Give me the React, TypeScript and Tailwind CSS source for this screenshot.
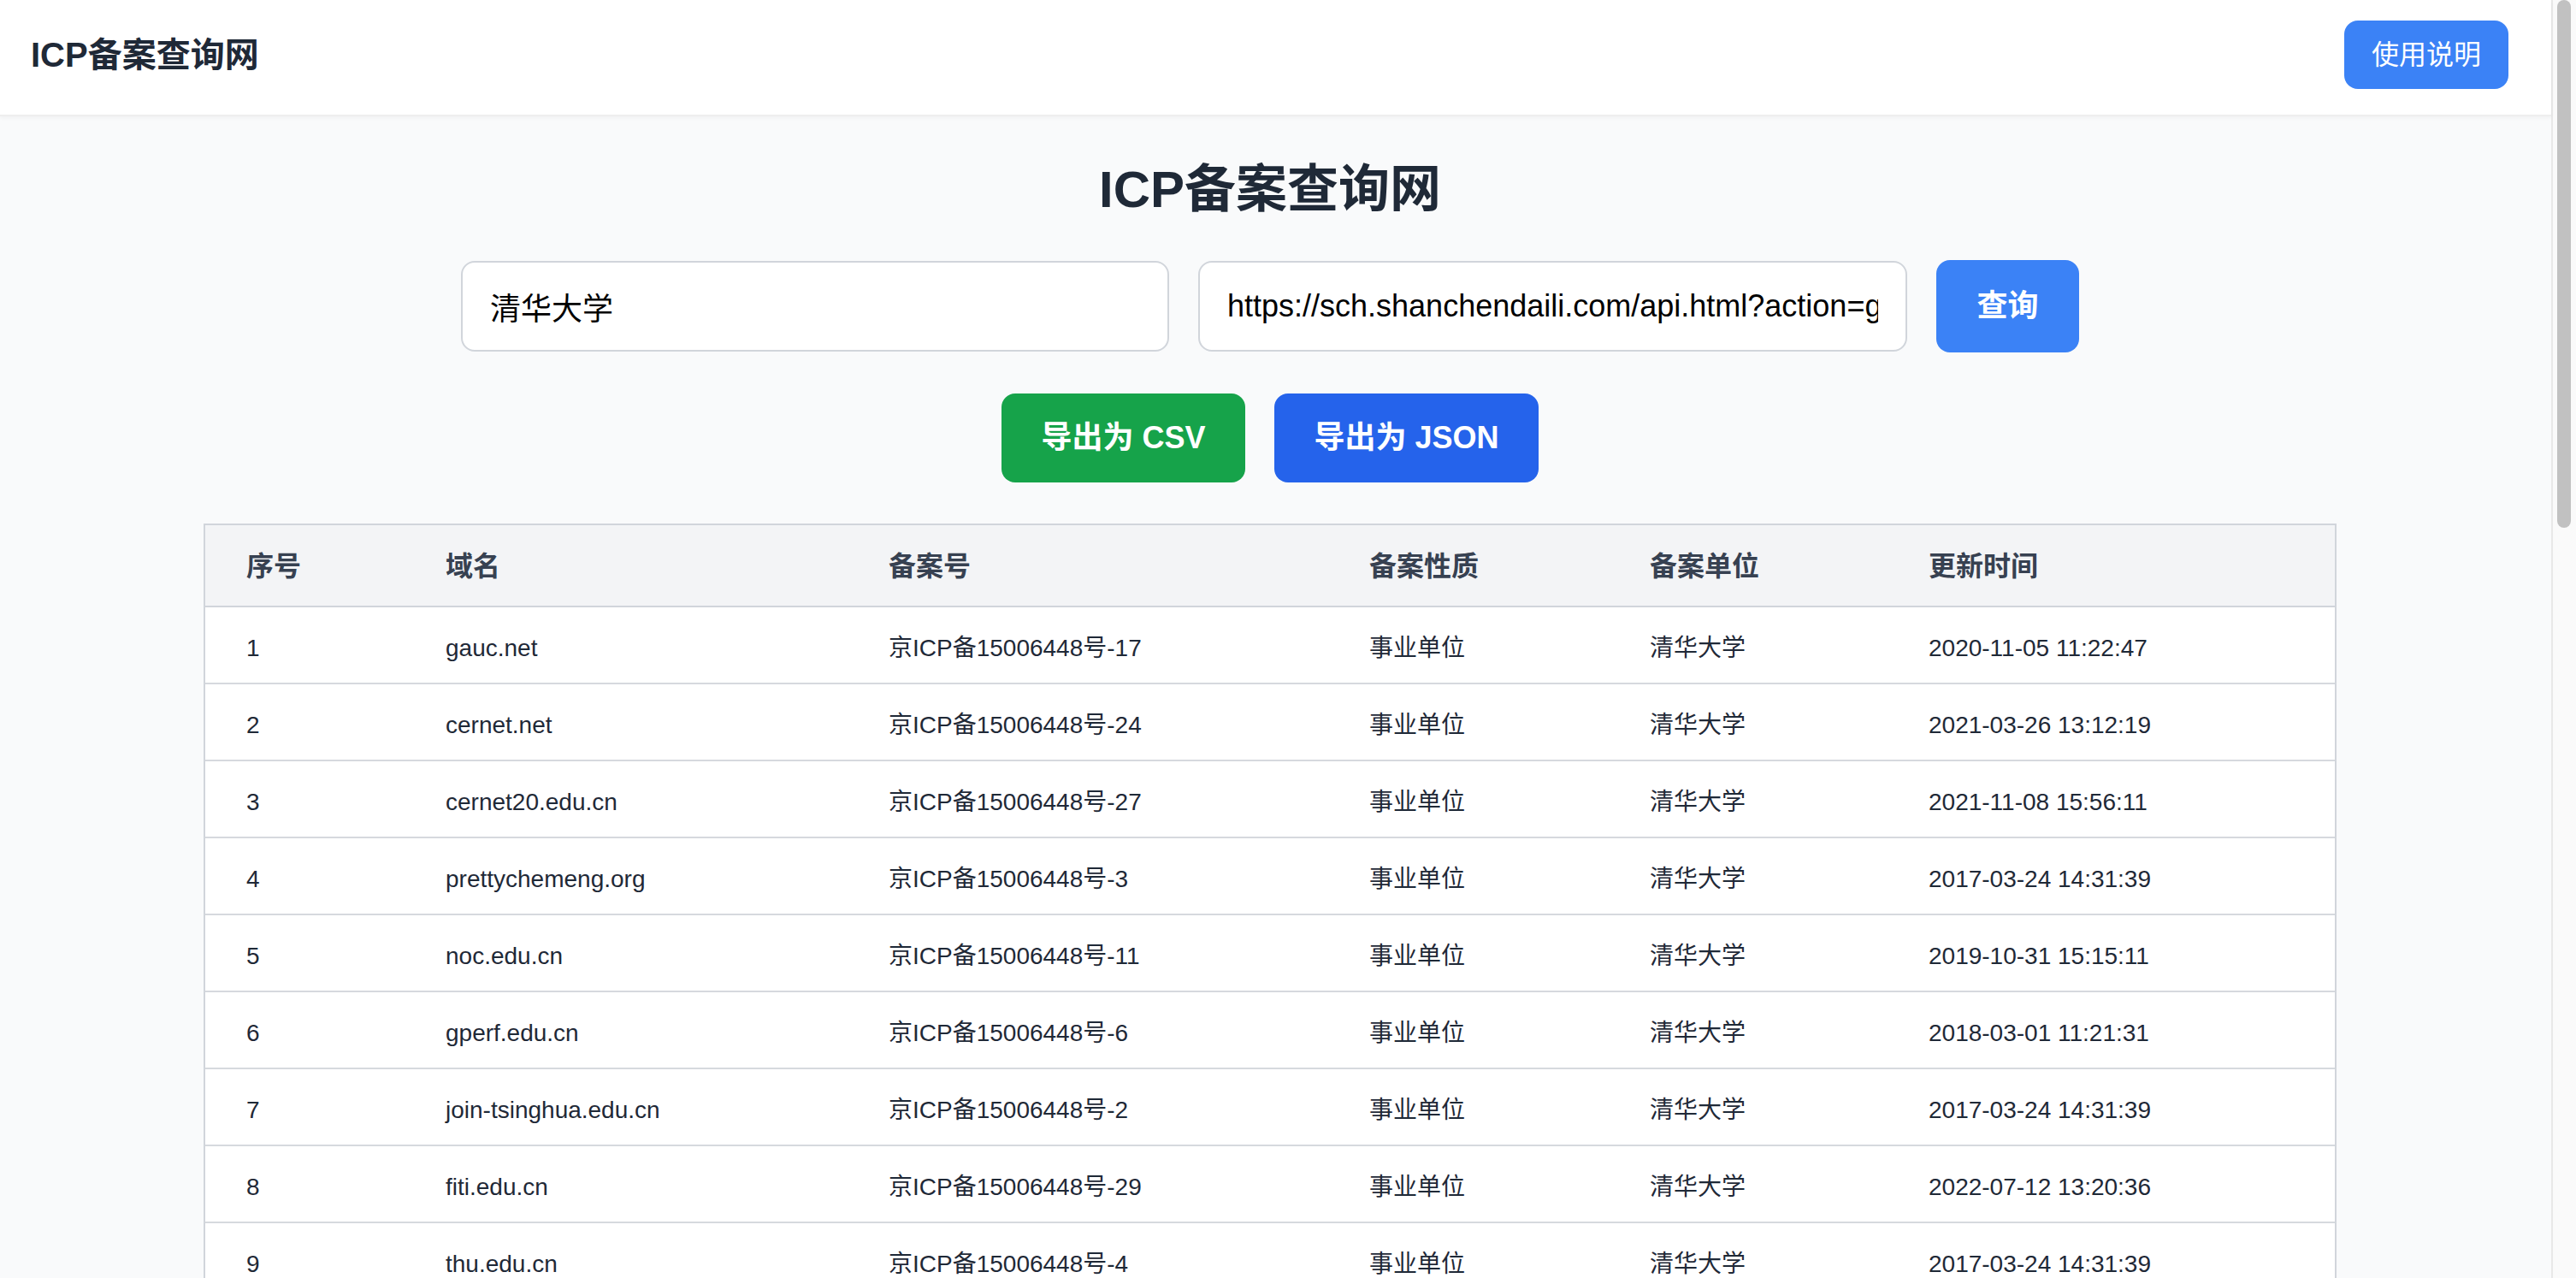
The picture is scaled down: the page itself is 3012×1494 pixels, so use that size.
import { useState } from "react";

interface IcpRecord {
  domain: string;
  icp: string;
  nature: string;
  unit: string;
  updated: string;
}

const records: IcpRecord[] = [
  { domain: "gauc.net", icp: "京ICP备15006448号-17", nature: "事业单位", unit: "清华大学", updated: "2020-11-05 11:22:47" },
  { domain: "cernet.net", icp: "京ICP备15006448号-24", nature: "事业单位", unit: "清华大学", updated: "2021-03-26 13:12:19" },
  { domain: "cernet20.edu.cn", icp: "京ICP备15006448号-27", nature: "事业单位", unit: "清华大学", updated: "2021-11-08 15:56:11" },
  { domain: "prettychemeng.org", icp: "京ICP备15006448号-3", nature: "事业单位", unit: "清华大学", updated: "2017-03-24 14:31:39" },
  { domain: "noc.edu.cn", icp: "京ICP备15006448号-11", nature: "事业单位", unit: "清华大学", updated: "2019-10-31 15:15:11" },
  { domain: "gperf.edu.cn", icp: "京ICP备15006448号-6", nature: "事业单位", unit: "清华大学", updated: "2018-03-01 11:21:31" },
  { domain: "join-tsinghua.edu.cn", icp: "京ICP备15006448号-2", nature: "事业单位", unit: "清华大学", updated: "2017-03-24 14:31:39" },
  { domain: "fiti.edu.cn", icp: "京ICP备15006448号-29", nature: "事业单位", unit: "清华大学", updated: "2022-07-12 13:20:36" },
  { domain: "thu.edu.cn", icp: "京ICP备15006448号-4", nature: "事业单位", unit: "清华大学", updated: "2017-03-24 14:31:39" },
  { domain: "tsinghua.edu.cn", icp: "京ICP备15006448号-1", nature: "事业单位", unit: "清华大学", updated: "2017-03-24 14:31:39" },
  { domain: "tsinghua.org.cn", icp: "京ICP备15006448号-5", nature: "事业单位", unit: "清华大学", updated: "2017-03-24 14:31:39" },
  { domain: "thuir.cn", icp: "京ICP备15006448号-7", nature: "事业单位", unit: "清华大学", updated: "2018-05-16 10:42:08" },
];

const headers = ["序号", "域名", "备案号", "备案性质", "备案单位", "更新时间"];

// column widths taken from the reference table
const cols = "grid grid-cols-[233px_518px_562px_328px_326px_523px]";

const App = () => {
  const [keyword, setKeyword] = useState("清华大学");
  const [api, setApi] = useState(
    "https://sch.shanchendaili.com/api.html?action=get_icp&keyword="
  );

  return (
    <div className="flex h-screen overflow-hidden bg-[#f9fafb] font-['Liberation_Sans','Noto_Sans_CJK_SC',sans-serif]">
      <div className="min-w-0 flex-1">
        {/* Top bar */}
        <header className="relative z-10 flex h-[136px] items-center justify-between border-b-2 border-[#eeeeee] bg-white pb-[6px] pl-[36px] pr-[50px] shadow-[0_2px_4px_rgba(0,0,0,0.04)]">
          <h1 className="text-[40px] font-bold leading-[56px] text-[#1f2937]">ICP备案查询网</h1>
          <button className="h-[80px] rounded-[16px] bg-[#3b82f6] px-[32px] text-[32px] leading-[48px] text-white">
            使用说明
          </button>
        </header>

        <main className="flex flex-col items-center pb-[115px] pr-[13px] pt-[50px]">
          <h2 className="mb-[46px] text-[60px] font-bold leading-[72px] text-[#1f2937]">ICP备案查询网</h2>

          {/* Search row */}
          <div className="mb-[48px] flex items-center gap-[34px]">
            <input
              value={keyword}
              onChange={(e) => setKeyword(e.target.value)}
              className="h-[106px] w-[828px] rounded-[16px] border-2 border-[#d1d5db] bg-white px-[32px] text-[36px] text-black outline-none"
            />
            <input
              value={api}
              onChange={(e) => setApi(e.target.value)}
              className="h-[106px] w-[829px] rounded-[16px] border-2 border-[#d1d5db] bg-white px-[32px] text-[36px] text-black outline-none"
            />
            <button className="h-[108px] w-[167px] rounded-[16px] bg-[#3b82f6] text-[36px] font-bold text-white">
              查询
            </button>
          </div>

          {/* Export buttons */}
          <div className="mb-[48px] flex gap-[34px]">
            <button className="flex h-[104px] w-[285px] items-center justify-center rounded-[16px] bg-[#16a34a] text-[36px] font-bold text-white">
              导出为 CSV
            </button>
            <button className="flex h-[104px] w-[309px] items-center justify-center rounded-[16px] bg-[#2563eb] text-[36px] font-bold text-white">
              导出为 JSON
            </button>
          </div>

          {/* Results table */}
          <div className="w-[2494px] border-2 border-[#d1d5db] bg-white">
            <div className={`${cols} h-[96px] items-center border-b-2 border-[#d1d5db] bg-[#f3f4f6] pt-[2px]`}>
              {headers.map((h) => (
                <div key={h} className="px-[48px] text-[32px] font-semibold text-[#374151]">
                  {h}
                </div>
              ))}
            </div>
            {records.map((r, i) => (
              <div
                key={r.domain}
                className={`${cols} h-[90px] items-center border-b-2 border-[#d6d9de] pt-[8px] text-[28px] text-[#1f2937] last:border-b-0`}
              >
                <div className="px-[48px]">{i + 1}</div>
                <div className="px-[48px]">{r.domain}</div>
                <div className="px-[48px]">{r.icp}</div>
                <div className="px-[48px]">{r.nature}</div>
                <div className="px-[48px]">{r.unit}</div>
                <div className="px-[48px]">{r.updated}</div>
              </div>
            ))}
          </div>
        </main>
      </div>

      {/* Page scrollbar as seen in the screenshot */}
      <div className="w-[29px] shrink-0 border-l-2 border-[#e8e8e8] bg-[#fafafa] pl-[5px]">
        <div className="h-[617px] w-[16px] rounded-full bg-[#c1c1c1]" />
      </div>
    </div>
  );
};

export default App;
